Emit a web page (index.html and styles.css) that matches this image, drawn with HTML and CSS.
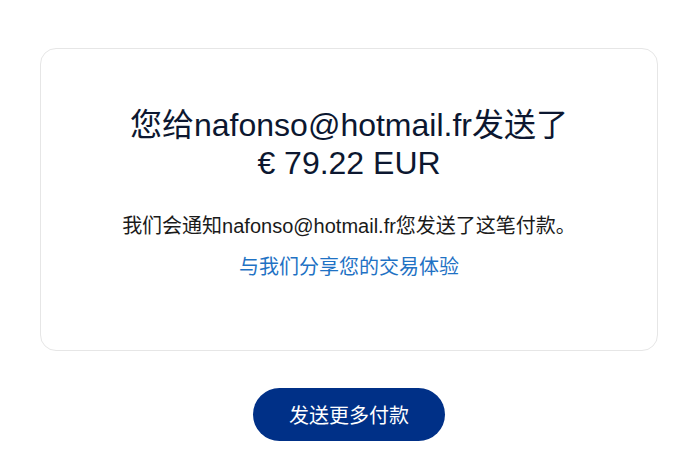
FILE: index.html
```html
<!DOCTYPE html>
<html lang="zh-CN">
<head>
  <meta charset="UTF-8" />
  <meta name="viewport" content="width=device-width, initial-scale=1.0"/>
  <title>付款已发送</title>
  <link rel="stylesheet" href="styles.css">
</head>
<body>
  <main class="page">
    <section class="result-card">
      <h1 class="result-title">您给nafonso@hotmail.fr发送了<br>€ 79.22 EUR</h1>
      <p class="result-note">我们会通知nafonso@hotmail.fr您发送了这笔付款。</p>
      <a class="result-link" href="#">与我们分享您的交易体验</a>
    </section>

    <div class="actions">
      <button class="primary-btn" type="button">发送更多付款</button>
    </div>
  </main>
</body>
</html>
```

FILE: styles.css
```css
/************************************************************************
 *  GLOBAL & RESET
 ************************************************************************/
* {
  margin: 0;
  padding: 0;
  box-sizing: border-box;
}
html, body {
  background: #fff;
  font-family: 'Liberation Sans', 'Noto Sans CJK SC', sans-serif;
  color: #2c2e2f;
}

.page {
  padding: 48px 40px 0;
  display: flex;
  flex-direction: column;
  align-items: center;
}

/************************************************************************
 *  RESULT CARD
 ************************************************************************/
.result-card {
  width: 100%;
  border: 1px solid #e6e6e6;
  border-radius: 16px;
  padding: 57px 20px 69px;
  display: flex;
  flex-direction: column;
  align-items: center;
  text-align: center;
}
.result-title {
  font-size: 32px;
  font-weight: 400;
  line-height: 38px;
  color: #0c1730;
}
.result-note {
  margin-top: 30px;
  font-size: 20px;
  line-height: 28px;
  color: #1a1a1a;
}
.result-link {
  margin-top: 13px;
  font-size: 20px;
  line-height: 28px;
  color: #1f72c4;
  text-decoration: none;
}

/************************************************************************
 *  ACTIONS
 ************************************************************************/
.actions {
  margin-top: 37px;
}
.primary-btn {
  background: #003087;
  color: #fff;
  border: none;
  border-radius: 27px;
  height: 53px;
  padding: 0 36px;
  font-family: inherit;
  font-size: 20px;
  cursor: pointer;
}
```
